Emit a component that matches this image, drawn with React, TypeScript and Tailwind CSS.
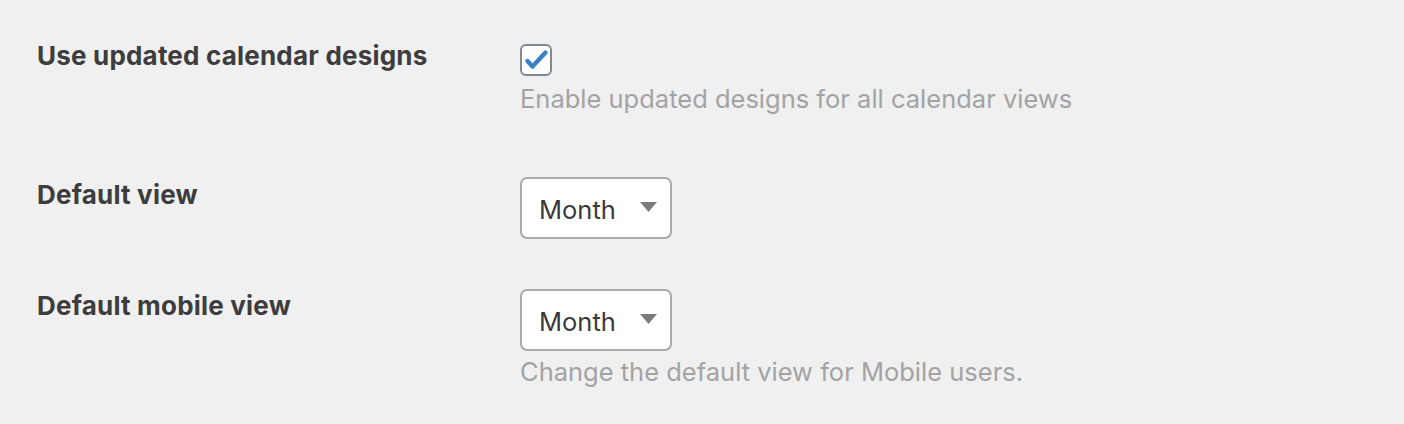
import React from 'react';

function Caret() {
  return (
    <svg width="17" height="10" viewBox="0 0 17 10" className="shrink-0">
      <path d="M0 0 L17 0 L8.5 10 Z" fill="#7b7b7b" />
    </svg>
  );
}

function Select({ value }: { value: string }) {
  return (
    <div className="w-[152px] h-[62px] bg-white border-2 border-[#a9a9a9] rounded-[7px] flex items-center justify-between pl-[17px] pr-[13px] text-[25.5px] leading-[32px] text-[#3a3a3a]">
      <span className="pt-[4px]">{value}</span>
      <span className="-mt-[2px]">
        <Caret />
      </span>
    </div>
  );
}

export default function App() {
  return (
    <div
      className="w-[1404px] h-[424px] bg-[#f0f0f1] pl-[37px] pt-[40px] text-[#3d3d3d]"
      style={{ fontFamily: 'Inter, "Liberation Sans", sans-serif' }}
    >
      {/* calendar designs */}
      <div className="flex">
        <div className="w-[483px] text-[26px] font-bold leading-[32px] tracking-[0.2px]">Use updated calendar designs</div>
        <div className="pt-[4px]">
          <div className="w-[32px] h-[32px] bg-white border-2 border-[#7e8993] rounded-[6px] relative">
            <svg width="32" height="32" viewBox="0 0 32 32" className="absolute -left-[2px] -top-[2px]">
              <path d="M7.5 17 L12.5 22.5 L25.5 8.5" fill="none" stroke="#3582c4" strokeWidth="4.4" strokeLinecap="round" strokeLinejoin="round" />
            </svg>
          </div>
          <div className="mt-[8px] text-[25.5px] text-[#a3a3a3] leading-[30px]">Enable updated designs for all calendar views</div>
        </div>
      </div>

      {/* default view */}
      <div className="flex mt-[63px]">
        <div className="w-[483px] text-[26px] font-bold leading-[32px] tracking-[0.2px] pt-[2px]">Default view</div>
        <Select value="Month" />
      </div>

      {/* mobile view */}
      <div className="flex mt-[50px]">
        <div className="w-[483px] text-[26px] font-bold leading-[32px] tracking-[0.2px] pt-[1px]">Default mobile view</div>
        <div>
          <Select value="Month" />
          <div className="mt-[6px] text-[25.5px] text-[#a3a3a3] leading-[30px]">Change the default view for Mobile users.</div>
        </div>
      </div>
    </div>
  );
}
